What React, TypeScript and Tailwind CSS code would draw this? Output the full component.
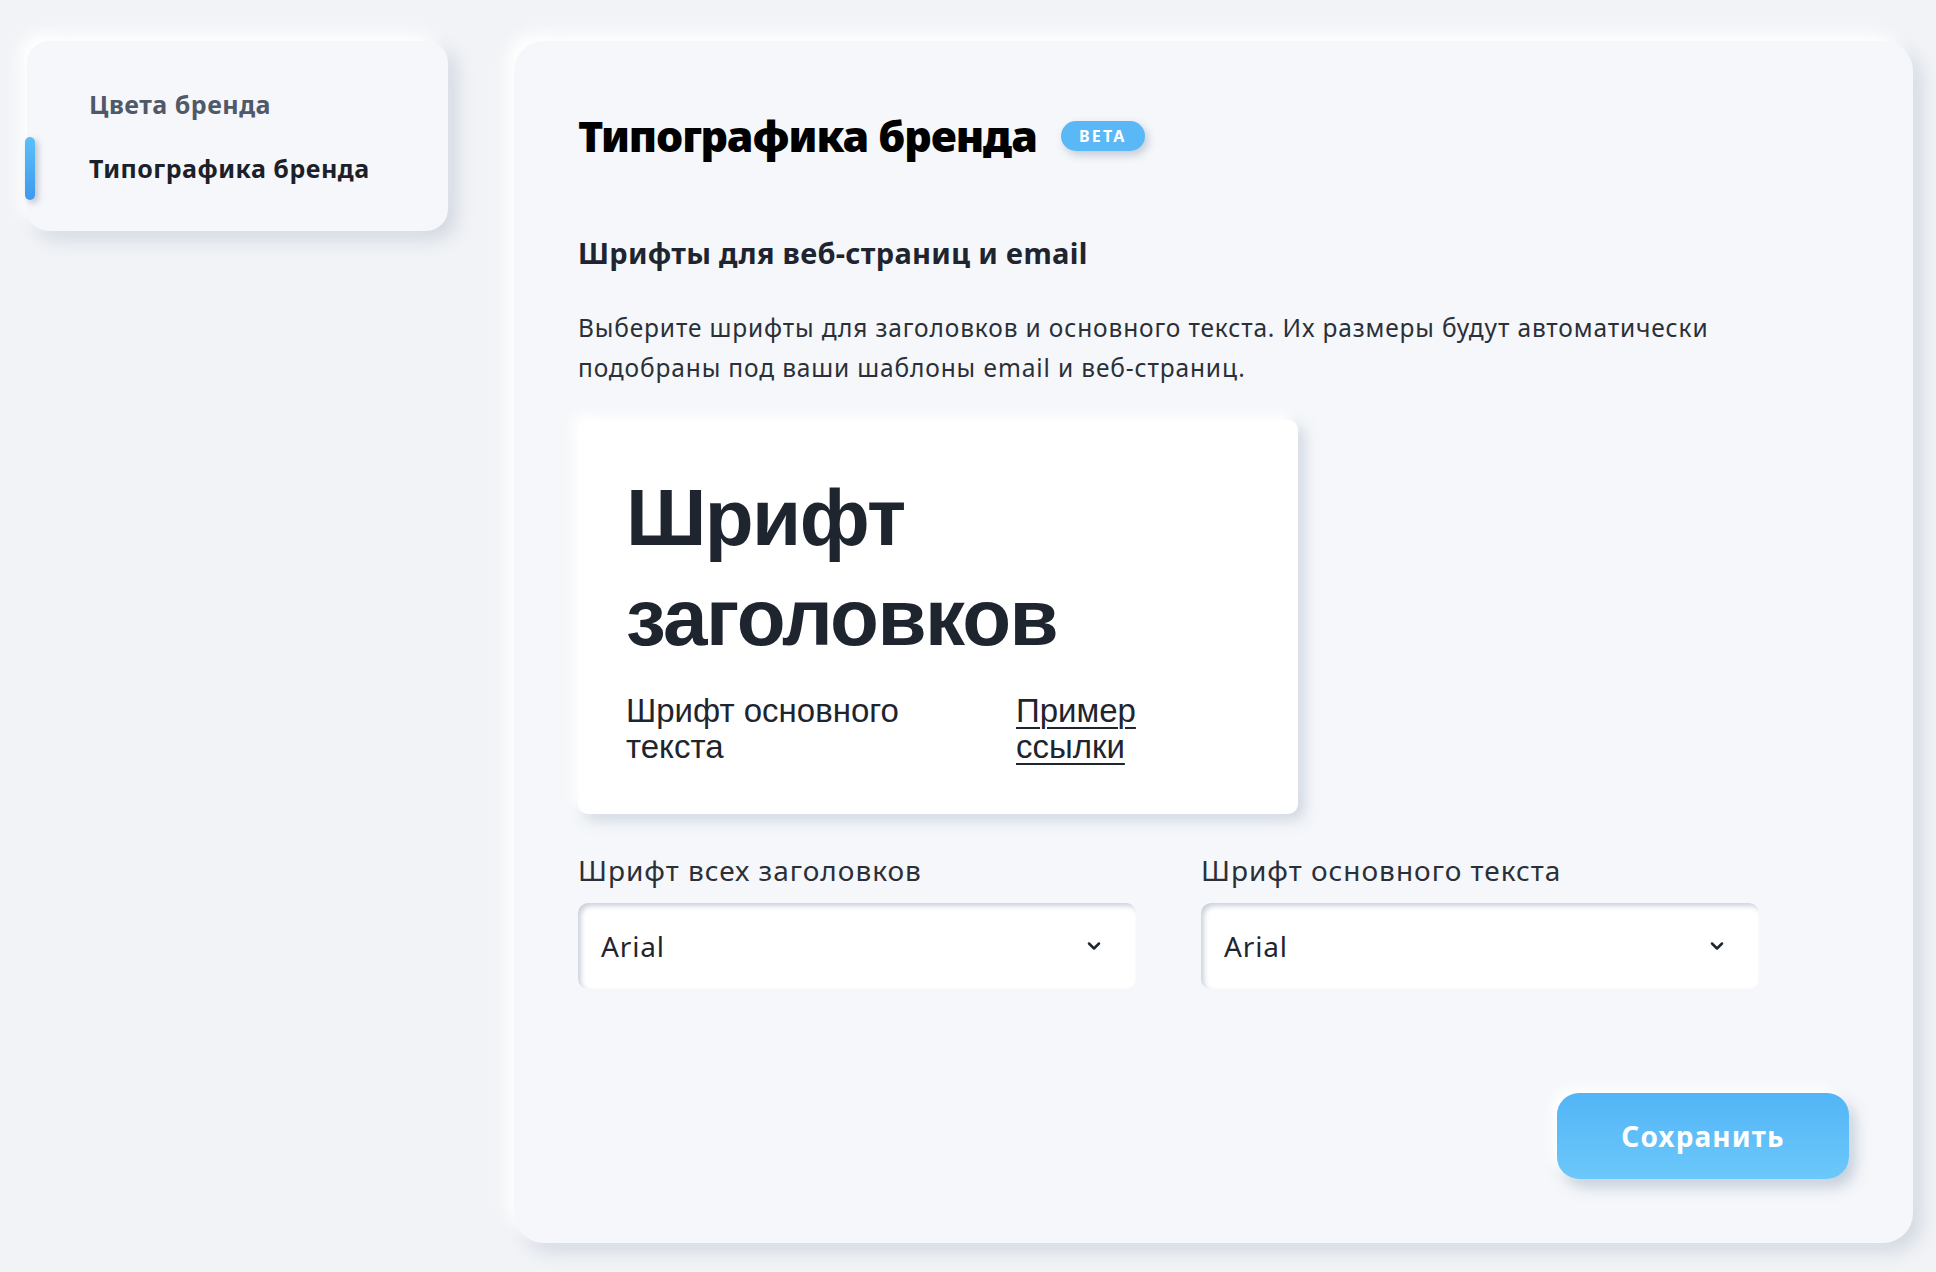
import { ChevronDown } from "lucide-react";

const SIDE = [
  { label: "Цвета бренда", active: false },
  { label: "Типографика бренда", active: true },
];

const FIELDS = [
  { label: "Шрифт всех заголовков", value: "Arial" },
  { label: "Шрифт основного текста", value: "Arial" },
];

export default function App() {
  return (
    <div className="flex min-h-screen gap-[66px] bg-[#f1f3f6] pb-[29px] pl-[27px] pr-[23px] pt-[41px] font-['Noto_Sans',sans-serif]">
      <aside className="relative h-[190px] w-[421px] shrink-0 rounded-[22px] bg-[#f5f7fa] pt-[32px] shadow-[-8px_-8px_16px_#ffffff,8px_8px_18px_rgba(170,181,200,0.45)]">
        {SIDE.map((item) => (
          <div key={item.label} className="relative flex h-[64px] items-center pl-[62px]">
            {item.active && (
              <span className="absolute left-[-2px] top-0 h-[63px] w-[10px] rounded-full bg-gradient-to-b from-[#5cc0f8] to-[#3f98f0] shadow-[3px_3px_6px_rgba(120,130,150,0.45)]" />
            )}
            <span
              className={[
                "text-[25px] font-bold tracking-[0.02em]",
                item.active ? "text-[#1c2028]" : "text-[#4f5968]",
              ].join(" ")}
            >
              {item.label}
            </span>
          </div>
        ))}
      </aside>

      <main className="flex flex-1 flex-col rounded-[30px] bg-[#f5f7fa] p-16 shadow-[-8px_-8px_16px_#ffffff,8px_8px_18px_rgba(170,181,200,0.45)]">
        <div className="flex items-center">
          <h1 className="text-[43px] font-black leading-[62px] tracking-[-0.025em] text-black">
            Типографика бренда
          </h1>
          <span className="ml-[24px] flex h-[30px] w-[84px] items-center justify-center rounded-full bg-[#5bb8f6] text-[16px] font-bold tracking-[0.14em] text-white shadow-[3px_4px_8px_rgba(120,135,160,0.4)]">
            BETA
          </span>
        </div>

        <h2 className="mt-[66px] text-[29px] font-bold leading-[40px] tracking-[0.01em] text-[#1f2530]">
          Шрифты для веб-страниц и email
        </h2>

        <p className="mt-[35px] max-w-[1183px] text-[24.5px] leading-[40px] tracking-[0.035em] text-[#2b3038]">
          Выберите шрифты для заголовков и основного текста. Их размеры будут автоматически
          подобраны под ваши шаблоны email и веб-страниц.
        </p>

        <div className="mt-[32px] w-[720px] rounded-[10px] bg-white pb-[49px] pl-[48px] pr-[50px] pt-[48px] font-['Liberation_Sans',Arial,sans-serif] text-[#1e252f] shadow-[-6px_-6px_12px_#ffffff,6px_6px_14px_rgba(170,181,200,0.5)]">
          <div className="text-[80px] font-bold leading-[100px] tracking-[-0.02em]">
            Шрифт
            <br />
            заголовков
          </div>
          <div className="mt-[25px] grid grid-cols-[372px_200px] gap-[18px] text-[33px] leading-[36px]">
            <span>Шрифт основного текста</span>
            <a href="#" className="underline decoration-2 underline-offset-[5px]">
              Пример ссылки
            </a>
          </div>
        </div>

        <div className="mt-[38px] grid w-[1181px] grid-cols-2 gap-[65px]">
          {FIELDS.map((f) => (
            <div key={f.label}>
              <div className="text-[28px] leading-[36px] tracking-[0.035em] text-[#2b3038]">{f.label}</div>
              <div className="mt-[15px] flex h-[86px] items-center justify-between rounded-[10px] bg-white pl-[23px] pr-[32px] shadow-[inset_3px_3px_5px_rgba(160,172,192,0.55),inset_-2px_-2px_4px_#ffffff]">
                <span className="text-[28px] tracking-[0.03em] text-[#1f2530]">{f.value}</span>
                <ChevronDown size={20} strokeWidth={3} className="text-[#1f2530]" />
              </div>
            </div>
          ))}
        </div>

        <button
          type="button"
          className="mt-auto flex h-[86px] w-[292px] items-center justify-center self-end rounded-[22px] bg-gradient-to-b from-[#53b5f7] to-[#6cc8fa] text-[28px] font-bold tracking-[0.04em] text-white shadow-[-6px_-6px_12px_#ffffff,6px_8px_14px_rgba(150,165,190,0.5)]"
        >
          Сохранить
        </button>
      </main>
    </div>
  );
}
